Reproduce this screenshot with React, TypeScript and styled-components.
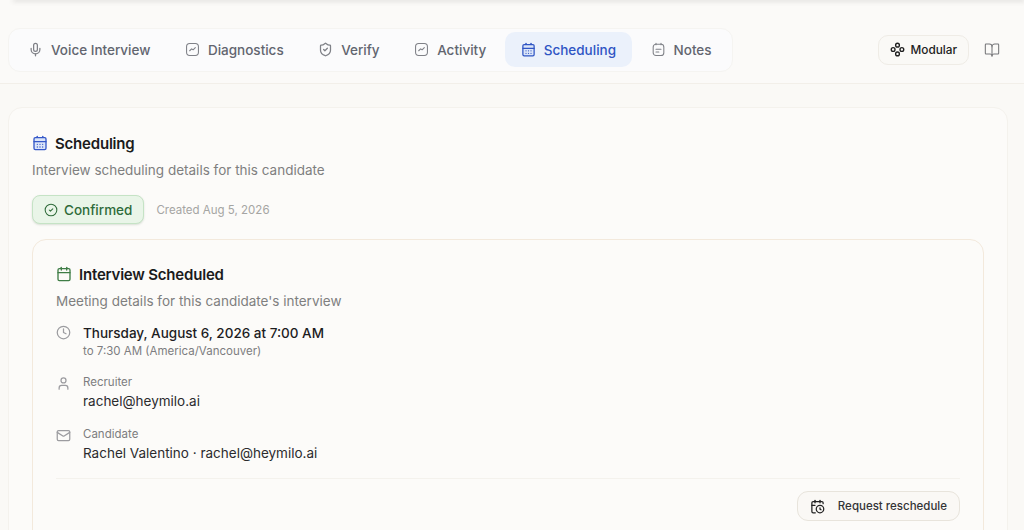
import React from "react";
import styled, { createGlobalStyle } from "styled-components";
import {
  BookOpen,
  Calendar,
  CalendarClock,
  CalendarDays,
  CircleCheck,
  Clock,
  Mail,
  Mic,
  ShieldCheck,
  User,
} from "lucide-react";

const GlobalStyle = createGlobalStyle`
  html, body {
    margin: 0;
    height: 100%;
    overflow: hidden;
    background: #faf9f6;
    font-family: Inter, "Liberation Sans", sans-serif;
  }
`;

const Page = styled.div`
  height: 530px;
  overflow: hidden;
  display: flex;
  flex-direction: column;
`;

const TopEdge = styled.div`
  position: relative;
  z-index: 1;
  height: 0;
  margin-left: 14px;
  box-shadow: 0 0 5px 1px rgba(60, 60, 60, 0.26);
`;

const Toolbar = styled.div`
  display: flex;
  align-items: center;
  justify-content: space-between;
  height: 84px;
  flex-shrink: 0;
  padding: 16px 24px 0 8px;
  box-sizing: border-box;
  background: #fbfaf8;
  border-bottom: 1px solid #f2efe9;
`;

const TabList = styled.div`
  display: flex;
  align-items: center;
  gap: 2.5px;
  height: 44px;
  box-sizing: border-box;
  padding: 0 4px 0 3px;
  background: #fbfbfc;
  border: 1px solid #f5f4f1;
  border-radius: 12px;
`;

const Tab = styled.div<{ $active?: boolean }>`
  display: flex;
  align-items: center;
  gap: 8px;
  height: 35px;
  padding: 0 16px;
  border-radius: 10px;
  font-size: 13.5px;
  font-weight: 500;
  color: ${({ $active }) => ($active ? "#2f55c4" : "#62656f")};
  background: ${({ $active }) => ($active ? "#ebf1fb" : "transparent")};
  svg {
    width: 15px;
    height: 15px;
    color: ${({ $active }) => ($active ? "#2f55c4" : "#7f8187")};
  }
`;

const ToolbarRight = styled.div`
  display: flex;
  align-items: center;
  gap: 15px;
  color: #77777a;
`;

const ModeButton = styled.div`
  display: flex;
  align-items: center;
  gap: 5px;
  height: 30px;
  box-sizing: border-box;
  padding: 0 11px;
  border: 1px solid #efece6;
  border-radius: 10px;
  background: #faf9f6;
  font-size: 11.8px;
  font-weight: 500;
  color: #222;
`;

const Content = styled.div`
  padding: 23px 16px 0 8px;
  background: #faf9f6;
  flex: 1;
`;

const Card = styled.section`
  padding: 24px 23px 0;
  background: #fcfbf9;
  border: 1px solid #f4f2ed;
  border-radius: 14px;
  height: 480px;
  box-sizing: border-box;
`;

const TitleRow = styled.div`
  display: flex;
  align-items: center;
  gap: 7px;
  height: 22px;
  font-size: 15px;
  font-weight: 600;
  letter-spacing: -0.2px;
  color: #1b1b1c;
  svg {
    width: 16px;
    height: 16px;
  }
`;

const Description = styled.p`
  margin: 6px 0 0;
  font-size: 13.5px;
  line-height: 20px;
  color: #7f7f7f;
`;

const StatusRow = styled.div`
  display: flex;
  align-items: center;
  gap: 12px;
  margin-top: 15px;
`;

const StatusBadge = styled.div`
  display: flex;
  align-items: center;
  gap: 6px;
  height: 29px;
  box-sizing: border-box;
  padding: 0 11px;
  background: #e9f5e8;
  border: 1px solid #c5e3c5;
  border-radius: 8px;
  box-shadow: 0 1px 2px rgba(60, 100, 60, 0.18);
  font-size: 13.5px;
  font-weight: 500;
  color: #2f6b3a;
`;

const CreatedAt = styled.span`
  font-size: 11.5px;
  color: #a5a5a3;
`;

const InnerCard = styled.div`
  margin-top: 15px;
  padding: 23px;
  background: #fcfbf9;
  border: 1px solid #f3e9dc;
  border-radius: 14px;
  height: 320px;
  box-sizing: border-box;
`;

const DetailRow = styled.div<{ $gap?: number }>`
  display: flex;
  gap: 12px;
  margin-top: ${({ $gap }) => $gap ?? 15}px;
  svg {
    width: 15px;
    height: 15px;
    margin-top: 2px;
    flex-shrink: 0;
    color: #9c9ca0;
  }
`;

const DetailText = styled.div`
  display: flex;
  flex-direction: column;
`;

const MainLine = styled.span<{ $strong?: boolean }>`
  font-size: 13.5px;
  line-height: 20px;
  font-weight: ${({ $strong }) => ($strong ? 500 : 400)};
  color: ${({ $strong }) => ($strong ? "#1d1d1f" : "#2b2b2e")};
`;

const SubLine = styled.span`
  font-size: 11.5px;
  line-height: 16px;
  color: #7d7d80;
`;

const FieldLabel = styled(SubLine)`
  margin-bottom: 1px;
`;

const Actions = styled.div`
  display: flex;
  justify-content: flex-end;
  margin-top: 15px;
  padding-top: 12px;
  border-top: 1px solid #f4f2ed;
`;

const RescheduleButton = styled.div`
  display: flex;
  align-items: center;
  gap: 13px;
  height: 30px;
  box-sizing: border-box;
  padding: 0 12px;
  background: #faf8f5;
  border: 1px solid #e8e4dc;
  border-radius: 11px;
  font-size: 11.5px;
  font-weight: 500;
  color: #333336;
  svg {
    width: 15px;
    height: 15px;
    color: #222;
  }
`;

const ChartSquare = () => (
  <svg viewBox="0 0 24 24" fill="none" stroke="currentColor" strokeWidth="1.7" strokeLinecap="round" strokeLinejoin="round">
    <rect x="2.5" y="2.5" width="19" height="19" rx="5" />
    <path d="M7.5 14l3-3 2.5 1.5 3.5-3.5" />
  </svg>
);

const NoteSquare = () => (
  <svg viewBox="0 0 24 24" fill="none" stroke="currentColor" strokeWidth="1.7" strokeLinecap="round" strokeLinejoin="round">
    <rect x="3.5" y="3.5" width="17" height="18" rx="4.5" />
    <path d="M8 2v2.5M16 2v2.5M8 11.5h8M8 16h4.5" />
  </svg>
);

const ModularIcon = () => (
  <svg width="15" height="15" viewBox="0 0 24 24" fill="none" stroke="#1f1f1f" strokeWidth="2.2">
    <circle cx="12" cy="5" r="3" />
    <circle cx="5" cy="12" r="3" />
    <circle cx="19" cy="12" r="3" />
    <circle cx="12" cy="19" r="3" />
  </svg>
);

const tabs = [
  { label: "Voice Interview", icon: <Mic /> },
  { label: "Diagnostics", icon: <ChartSquare /> },
  { label: "Verify", icon: <ShieldCheck /> },
  { label: "Activity", icon: <ChartSquare /> },
  { label: "Scheduling", icon: <CalendarDays fill="#dbe5f8" />, active: true },
  { label: "Notes", icon: <NoteSquare /> },
];

export default function App() {
  return (
    <Page>
      <GlobalStyle />
      <TopEdge />
      <Toolbar>
        <TabList>
          {tabs.map((tab) => (
            <Tab key={tab.label} $active={tab.active}>
              {tab.icon}
              {tab.label}
            </Tab>
          ))}
        </TabList>
        <ToolbarRight>
          <ModeButton>
            <ModularIcon />
            Modular
          </ModeButton>
          <BookOpen size={16} strokeWidth={1.6} />
        </ToolbarRight>
      </Toolbar>
      <Content>
        <Card>
          <TitleRow>
            <CalendarDays color="#3558c8" fill="#dbe5f8" />
            Scheduling
          </TitleRow>
          <Description>Interview scheduling details for this candidate</Description>
          <StatusRow>
            <StatusBadge>
              <CircleCheck size={14} strokeWidth={1.8} />
              Confirmed
            </StatusBadge>
            <CreatedAt>Created Aug 5, 2026</CreatedAt>
          </StatusRow>
          <InnerCard>
            <TitleRow>
              <Calendar color="#3f7d46" />
              Interview Scheduled
            </TitleRow>
            <Description>Meeting details for this candidate's interview</Description>
            <DetailRow $gap={12}>
              <Clock />
              <DetailText>
                <MainLine $strong>Thursday, August 6, 2026 at 7:00 AM</MainLine>
                <SubLine>to 7:30 AM (America/Vancouver)</SubLine>
              </DetailText>
            </DetailRow>
            <DetailRow>
              <User />
              <DetailText>
                <FieldLabel>Recruiter</FieldLabel>
                <MainLine>rachel@heymilo.ai</MainLine>
              </DetailText>
            </DetailRow>
            <DetailRow>
              <Mail />
              <DetailText>
                <FieldLabel>Candidate</FieldLabel>
                <MainLine>Rachel Valentino · rachel@heymilo.ai</MainLine>
              </DetailText>
            </DetailRow>
            <Actions>
              <RescheduleButton>
                <CalendarClock />
                Request reschedule
              </RescheduleButton>
            </Actions>
          </InnerCard>
        </Card>
      </Content>
    </Page>
  );
}
